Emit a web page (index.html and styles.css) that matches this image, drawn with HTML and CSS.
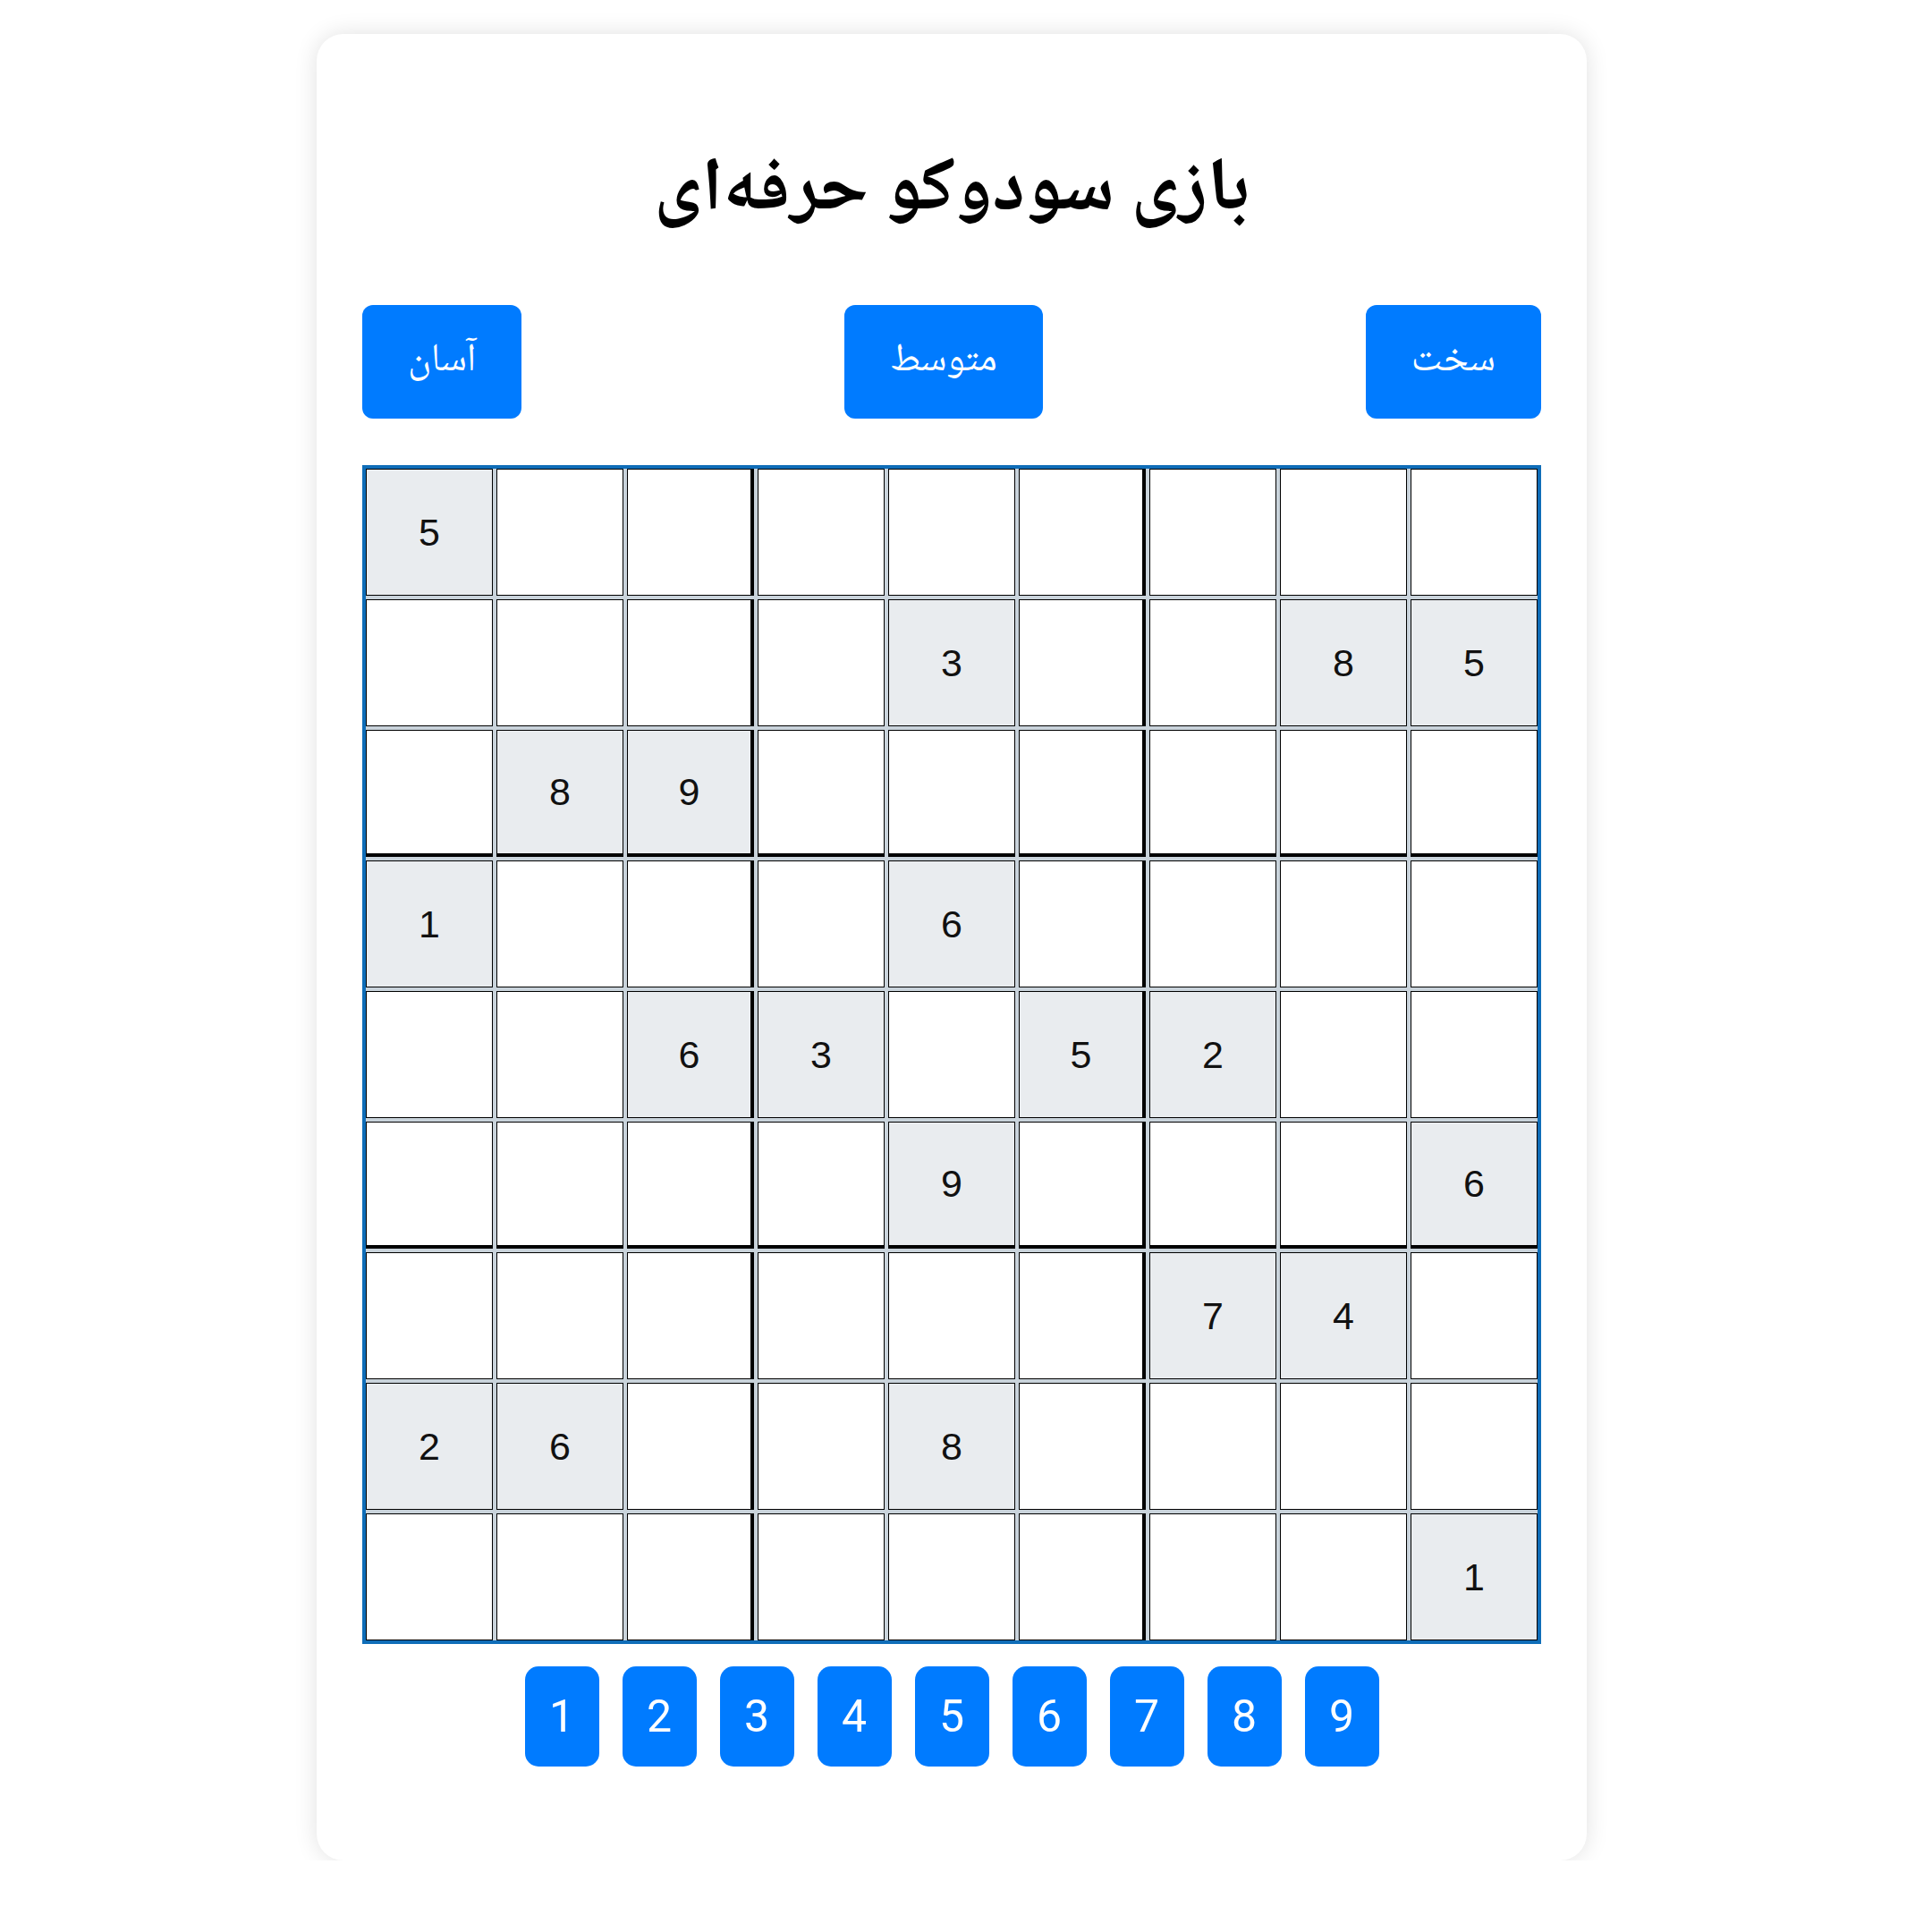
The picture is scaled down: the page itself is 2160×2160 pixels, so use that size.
FILE: index.html
```html
<!DOCTYPE html>
<html lang="fa">
<head>
<meta charset="utf-8">
<title>بازی سودوکو حرفه‌ای</title>
<link rel="stylesheet" href="styles.css">
</head>
<body>
<div class="card">
  <h1 class="title" dir="rtl">بازی سودوکو حرفه‌ای</h1>
  <div class="levels">
    <button class="level">آسان</button>
    <button class="level">متوسط</button>
    <button class="level">سخت</button>
  </div>
  <div class="board">
    <div class="cell given">5</div><div class="cell"></div><div class="cell bx"></div><div class="cell"></div><div class="cell"></div><div class="cell bx"></div><div class="cell"></div><div class="cell"></div><div class="cell"></div>
    <div class="cell"></div><div class="cell"></div><div class="cell bx"></div><div class="cell"></div><div class="cell given">3</div><div class="cell bx"></div><div class="cell"></div><div class="cell given">8</div><div class="cell given">5</div>
    <div class="cell by"></div><div class="cell given by">8</div><div class="cell given bx by">9</div><div class="cell by"></div><div class="cell by"></div><div class="cell bx by"></div><div class="cell by"></div><div class="cell by"></div><div class="cell by"></div>
    <div class="cell given">1</div><div class="cell"></div><div class="cell bx"></div><div class="cell"></div><div class="cell given">6</div><div class="cell bx"></div><div class="cell"></div><div class="cell"></div><div class="cell"></div>
    <div class="cell"></div><div class="cell"></div><div class="cell given bx">6</div><div class="cell given">3</div><div class="cell"></div><div class="cell given bx">5</div><div class="cell given">2</div><div class="cell"></div><div class="cell"></div>
    <div class="cell by"></div><div class="cell by"></div><div class="cell bx by"></div><div class="cell by"></div><div class="cell given by">9</div><div class="cell bx by"></div><div class="cell by"></div><div class="cell by"></div><div class="cell given by">6</div>
    <div class="cell"></div><div class="cell"></div><div class="cell bx"></div><div class="cell"></div><div class="cell"></div><div class="cell bx"></div><div class="cell given">7</div><div class="cell given">4</div><div class="cell"></div>
    <div class="cell given">2</div><div class="cell given">6</div><div class="cell bx"></div><div class="cell"></div><div class="cell given">8</div><div class="cell bx"></div><div class="cell"></div><div class="cell"></div><div class="cell"></div>
    <div class="cell"></div><div class="cell"></div><div class="cell bx"></div><div class="cell"></div><div class="cell"></div><div class="cell bx"></div><div class="cell"></div><div class="cell"></div><div class="cell given">1</div>
  </div>
  <div class="pad">
    <button class="num">1</button>
    <button class="num">2</button>
    <button class="num">3</button>
    <button class="num">4</button>
    <button class="num">5</button>
    <button class="num">6</button>
    <button class="num">7</button>
    <button class="num">8</button>
    <button class="num">9</button>
  </div>
</div>
</body>
</html>
```
FILE: styles.css
```css
html, body {
  margin: 0;
  padding: 0;
  background: #ffffff;
}
body {
  padding: 38px 0 0 354px;
  font-family: Roboto, "DejaVu Sans", sans-serif;
}
.card {
  width: 1420px;
  height: 2042px;
  box-sizing: border-box;
  background: #ffffff;
  border-radius: 30px;
  box-shadow: 0 0 26px rgba(0, 0, 0, 0.12);
  padding: 0 51px;
  display: flex;
  flex-direction: column;
}
.title {
  margin: 118px 0 0 0;
  height: 120px;
  line-height: 120px;
  text-align: center;
  font-family: "Noto Naskh Arabic", "Noto Sans Arabic", "Vazirmatn", "DejaVu Sans", sans-serif;
  font-weight: bold;
  font-size: 84px;
  color: #000;
}
.levels {
  margin-top: 65px;
  display: flex;
  justify-content: space-between;
}
.level {
  height: 127px;
  padding: 0 51px;
  border: none;
  border-radius: 12px;
  background: #007bff;
  color: #fff;
  font-family: "Noto Naskh Arabic", "Noto Sans Arabic", "DejaVu Sans", sans-serif;
  font-size: 44px;
}
.board {
  margin-top: 52px;
  display: grid;
  grid-template-columns: repeat(9, 1fr);
  grid-auto-rows: 142px;
  gap: 4px;
  border: 4px solid #0f6db8;
  background: #c9d3db;
}
.cell {
  box-sizing: border-box;
  border: 1px solid #000;
  background: #ffffff;
  display: flex;
  align-items: center;
  justify-content: center;
  font-family: "Liberation Sans", Arial, sans-serif;
  font-size: 43px;
  color: #111;
}
.cell.given {
  background: #e9ecef;
}
.cell.bx {
  border-right: 4px solid #000;
}
.cell.by {
  border-bottom: 4px solid #000;
}
.pad {
  margin-top: 25px;
  display: flex;
  justify-content: center;
  gap: 26px;
}
.num {
  width: 83px;
  height: 112px;
  border: none;
  border-radius: 15px;
  background: #007bff;
  color: #fff;
  font-family: Roboto, sans-serif;
  font-size: 50px;
  padding: 0;
}
```
